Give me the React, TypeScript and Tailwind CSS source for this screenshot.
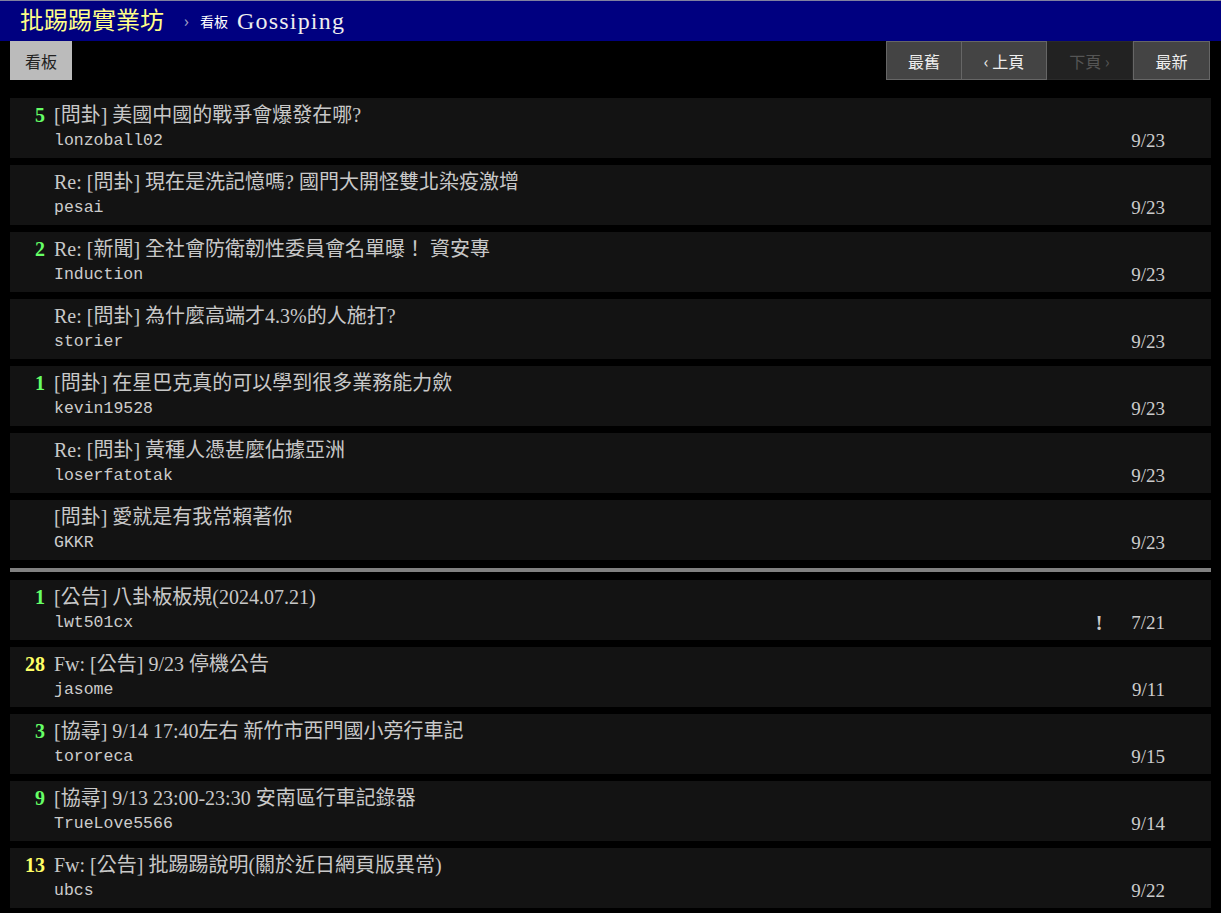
const SERIF = 'font-["Liberation_Serif","Noto_Sans_CJK_TC",serif]';

type Post = {
  push?: string;
  hot?: boolean;
  title: string;
  author: string;
  date: string;
  mark?: string;
};

const posts: Post[] = [
  { push: '5', title: '[問卦] 美國中國的戰爭會爆發在哪?', author: 'lonzoball02', date: '9/23' },
  { title: 'Re: [問卦] 現在是洗記憶嗎? 國門大開怪雙北染疫激增', author: 'pesai', date: '9/23' },
  { push: '2', title: 'Re: [新聞] 全社會防衛韌性委員會名單曝！ 資安專', author: 'Induction', date: '9/23' },
  { title: 'Re: [問卦] 為什麼高端才4.3%的人施打?', author: 'storier', date: '9/23' },
  { push: '1', title: '[問卦] 在星巴克真的可以學到很多業務能力歛', author: 'kevin19528', date: '9/23' },
  { title: 'Re: [問卦] 黃種人憑甚麼佔據亞洲', author: 'loserfatotak', date: '9/23' },
  { title: '[問卦] 愛就是有我常賴著你', author: 'GKKR', date: '9/23' },
];

const pinned: Post[] = [
  { push: '1', title: '[公告] 八卦板板規(2024.07.21)', author: 'lwt501cx', date: '7/21', mark: '!' },
  { push: '28', hot: true, title: 'Fw: [公告] 9/23 停機公告', author: 'jasome', date: '9/11' },
  { push: '3', title: '[協尋] 9/14 17:40左右 新竹市西門國小旁行車記', author: 'tororeca', date: '9/15' },
  { push: '9', title: '[協尋] 9/13 23:00-23:30 安南區行車記錄器', author: 'TrueLove5566', date: '9/14' },
  { push: '13', hot: true, title: 'Fw: [公告] 批踢踢說明(關於近日網頁版異常)', author: 'ubcs', date: '9/22' },
];

function PostRow({ post }: { post: Post }) {
  return (
    <div className="h-[60px] bg-[#131313] pt-[4px]">
      <div className="flex leading-[26px]">
        <span
          className={`w-[35px] shrink-0 text-right text-[20px] font-semibold ${SERIF} ${
            post.hot ? 'text-[#ffff66]' : 'text-[#66ff66]'
          }`}
        >
          {post.push}
        </span>
        <span className={`ml-[9px] text-[20px] text-[#c8c8c8] ${SERIF}`}>{post.title}</span>
      </div>
      <div className="flex items-center leading-[26px]">
        <span className="ml-[44px] flex-1 font-['Liberation_Mono',monospace] text-[16.5px] text-[#cccccc]">
          {post.author}
        </span>
        <span className={`w-[30px] text-center text-[20px] font-bold text-[#cccccc] ${SERIF}`}>
          {post.mark}
        </span>
        <span className={`ml-[15px] mr-[46px] w-[36px] text-right text-[19px] text-[#cccccc] ${SERIF}`}>
          {post.date}
        </span>
      </div>
    </div>
  );
}

export default function App() {
  const navBase =
    'flex h-full items-center justify-center border text-[16px] font-["Noto_Sans_CJK_TC",sans-serif]';
  const navOn = `${navBase} border-[#666] bg-[#444] text-[#eeeeee]`;
  const navOff = `${navBase} border-[#2a2a2a] bg-[#222] text-[#555]`;

  return (
    <div className="min-h-[913px] bg-black pb-[8px]">
      {/* top bar */}
      <div className="flex h-[41px] items-center border-t border-[#8080a0] bg-[#000080] pl-[20px]">
        <span className={`text-[24px] text-[#ffff88] ${SERIF}`}>批踢踢實業坊</span>
        <span className="ml-[20px] text-[16px] text-[#9a9ac0]">›</span>
        <span className="ml-[11px] text-[14px] text-white font-['Noto_Sans_CJK_TC',sans-serif]">看板</span>
        <span className={`ml-[9px] text-[24px] tracking-[1.2px] text-[#eeeeee] ${SERIF}`}>Gossiping</span>
      </div>

      {/* action bar */}
      <div className="flex h-[39px] items-stretch justify-between pl-[10px] pr-[11px]">
        <div className="flex w-[62px] items-center justify-center bg-[#bbbbbb] text-[16px] text-[#222] font-['Noto_Sans_CJK_TC',sans-serif]">
          看板
        </div>
        <div className="flex">
          <div className={`${navOn} w-[76px]`}>最舊</div>
          <div className={`${navOn} w-[85px] border-l-0`}>‹ 上頁</div>
          <div className={`${navOff} w-[86px] border-l-0`}>下頁 ›</div>
          <div className={`${navOn} w-[77px]`}>最新</div>
        </div>
      </div>

      {/* list */}
      <div className="mt-[18px] flex flex-col gap-[7px] px-[10px]">
        {posts.map((p, i) => (
          <PostRow key={i} post={p} />
        ))}
      </div>

      <div className="mx-[10px] mt-[8px] h-[4px] bg-[#808080]" />

      <div className="mt-[8px] flex flex-col gap-[7px] px-[10px]">
        {pinned.map((p, i) => (
          <PostRow key={i} post={p} />
        ))}
      </div>
    </div>
  );
}
